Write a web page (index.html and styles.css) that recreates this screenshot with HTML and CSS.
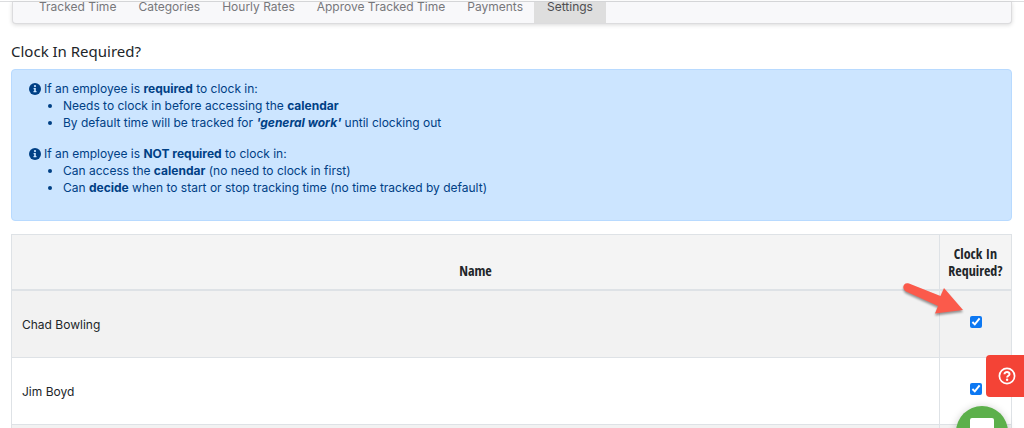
FILE: index.html
```html
<!DOCTYPE html>
<html lang="en">
<head>
<meta charset="utf-8">
<title>Clock In Settings</title>
<link rel="stylesheet" href="styles.css">
</head>
<body>
<div class="topbar"></div>
<nav class="tabs">
  <a class="tab" href="#tracked">Tracked Time</a>
  <a class="tab" href="#categories">Categories</a>
  <a class="tab" href="#rates">Hourly Rates</a>
  <a class="tab" href="#approve">Approve Tracked Time</a>
  <a class="tab" href="#payments">Payments</a>
  <a class="tab tab-active" href="#settings" aria-current="page">Settings</a>
</nav>
<main class="content">
  <h1 class="title">Clock In Required?</h1>
  <section class="notice">
    <p class="notice-lead"><svg class="info" viewBox="0 0 12 12" aria-hidden="true"><circle cx="6" cy="6" r="6" fill="currentColor"/><circle cx="6" cy="3.1" r="1.1" fill="#cce5ff"/><path d="M4.6 5h2.2v3h.7v1.3h-3V8h.7V6.300h-.6z" fill="#cce5ff"/></svg><span>If an employee is <b>required</b> to clock in:</span></p>
    <ul class="notice-list">
      <li>Needs to clock in before accessing the <b>calendar</b></li>
      <li>By default time will be tracked for <b><i>'general work'</i></b> until clocking out</li>
    </ul>
    <p class="notice-lead"><svg class="info" viewBox="0 0 12 12" aria-hidden="true"><circle cx="6" cy="6" r="6" fill="currentColor"/><circle cx="6" cy="3.1" r="1.1" fill="#cce5ff"/><path d="M4.6 5h2.2v3h.7v1.3h-3V8h.7V6.300h-.6z" fill="#cce5ff"/></svg><span>If an employee is <b>NOT required</b> to clock in:</span></p>
    <ul class="notice-list">
      <li>Can access the <b>calendar</b> (no need to clock in first)</li>
      <li>Can <b>decide</b> when to start or stop tracking time (no time tracked by default)</li>
    </ul>
  </section>
  <table class="staff">
    <thead>
      <tr><th scope="col">Name</th><th class="check-col" scope="col">Clock In Required?</th></tr>
    </thead>
    <tbody>
      <tr><td><label for="chad">Chad Bowling</label></td><td class="check-col"><input class="check" type="checkbox" id="chad" checked></td></tr>
      <tr><td><label for="jim">Jim Boyd</label></td><td class="check-col"><input class="check" type="checkbox" id="jim" checked></td></tr>
      <tr><td></td><td class="check-col"></td></tr>
    </tbody>
  </table>
</main>
<svg class="arrow" viewBox="0 0 64 40" aria-hidden="true"><path d="M8 3.500L39.500 16L43 8L62 30L34 33.500L37 26L5 11.500C0 8.500 2.500 1.500 8 3.500Z" fill="#fb5a4b"/></svg>
<button class="help" type="button" aria-label="Help"><svg class="help-icon" viewBox="0 0 18 18" fill="none" stroke="#fff" aria-hidden="true"><circle cx="9" cy="9" r="7.600" stroke-width="1.700"/><path d="M6.500 7.300C6.500 4.200 11.700 4.400 11.500 7.200C11.400 8.900 9.200 8.700 9.100 10.500" stroke-width="2"/><circle cx="9.100" cy="12.700" r="1.200" fill="#fff" stroke="none"/></svg></button>
<button class="chat" type="button" aria-label="Chat"><svg class="chat-icon" viewBox="0 0 24 24" aria-hidden="true"><path d="M2 0H22Q24 0 24 2V24L18 19H2Q0 19 0 17V2Q0 0 2 0Z" fill="#fff"/></svg></button>
</body>
</html>
```
FILE: styles.css
```css
* { box-sizing: border-box; }
body {
  margin: 0;
  height: 100vh;
  overflow: hidden;
  background: #fff;
  color: #212529;
  font: 12px/17px Inter, "Liberation Sans", sans-serif;
}
.topbar { height: 2px; border-bottom: 1px solid #dcdddf; }
.tabs {
  display: flex;
  align-items: flex-end;
  height: 22px;
  margin: 0 12px;
  padding-left: 15px;
  overflow: clip;
  background: #f8f8fa;
  border: 1px solid #dcdcde;
  border-top: 0;
  border-radius: 0 0 4px 4px;
  box-shadow: 0 1px 4px rgba(0, 0, 0, .15);
}
.tab {
  padding: 10px 11px 8px;
  color: #77777a;
  text-decoration: none;
  white-space: nowrap;
}
.tab-active { padding-right: 13px; padding-left: 13px; background: #dedede; color: #4f4f52; }
.content { padding: 18px 12px 0 11px; }
.title {
  margin: 0 0 8px;
  font: 400 15px/19px "Noto Sans", sans-serif;
}
.notice {
  padding: 10px 17px 24px;
  background: #cce5ff;
  border: 1px solid #b8daff;
  border-radius: 4px;
  color: #004085;
}
.notice-lead {
  display: flex;
  align-items: center;
  gap: 3px;
  margin: 0;
}
.info { width: 12px; height: 12px; }
.notice-list { margin: 0; padding-left: 34px; }
.notice-list:not(:last-child) { margin-bottom: 14px; }
.staff {
  width: 100%;
  margin-top: 13px;
  border-collapse: collapse;
  border: 1px solid #dee2e6;
}
.staff th, .staff td { border: 1px solid #dee2e6; }
.staff th {
  padding: 10px 8px;
  background: #f4f4f4;
  border-bottom-width: 2px;
  font: 700 14px/17px "Open Sans Condensed", "Liberation Sans Narrow", "Roboto Condensed", "Liberation Sans", sans-serif;
  text-align: center;
  vertical-align: bottom;
}
.staff td { height: 67px; padding: 2px 10px 0; }
.staff tbody tr:nth-child(odd) { background: #f2f2f2; }
.staff .check-col { width: 72px; padding-right: 0; padding-left: 0; text-align: center; }
.check {
  display: block;
  width: 12px;
  height: 12px;
  margin: 0 auto 6px;
  accent-color: #0d78f2;
}
.arrow {
  position: absolute;
  right: 59px;
  top: 280px;
  width: 64px;
  height: 40px;
  filter: drop-shadow(0 2px 1px rgba(0, 0, 0, .4));
}
.help {
  position: fixed;
  right: 0;
  bottom: 31px;
  display: flex;
  align-items: center;
  width: 38px;
  height: 42px;
  padding: 0 12px;
  background: #f44336;
  border: 0;
  border-radius: 4px 0 0 4px;
}
.help-icon { flex: none; width: 18px; height: 18px; }
.chat {
  position: fixed;
  right: 16px;
  bottom: -30px;
  display: flex;
  justify-content: center;
  width: 52px;
  height: 52px;
  padding: 12px 0 0;
  background: #5cb04b;
  border: 0;
  border-radius: 50%;
  box-shadow: 0 1px 8px rgba(0, 0, 0, .2);
}
.chat-icon { width: 24px; height: 24px; }
```
